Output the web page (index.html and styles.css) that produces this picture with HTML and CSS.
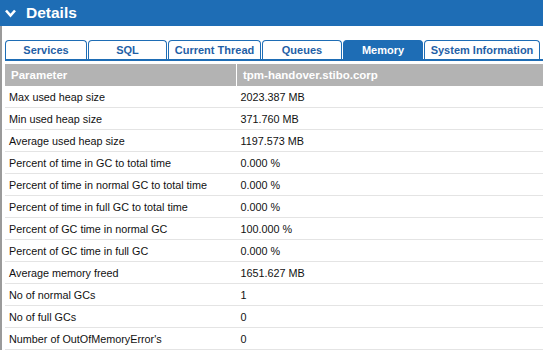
FILE: index.html
```html
<!DOCTYPE html>
<html lang="en">
<head>
    <meta charset="UTF-8">
    <title>Details</title>
    <link rel="stylesheet" href="styles.css">
</head>
<body>
    <div class="panel">
        <div class="panel-header">
            <svg class="chevron" width="11" height="9" viewBox="0 0 11 9"><path d="M1 1.5 L5.5 6.5 L10 1.5" fill="none" stroke="#fff" stroke-width="2.6"/></svg>
            <span>Details</span>
        </div>
        <div class="panel-body">
            <div class="tabs">
                <div class="tab t1">Services</div>
                <div class="tab t2">SQL</div>
                <div class="tab t3">Current Thread</div>
                <div class="tab t4">Queues</div>
                <div class="tab t5 active">Memory</div>
                <div class="tab t6">System Information</div>
            </div>
            <table class="grid">
                <thead>
                    <tr><th class="c1">Parameter</th><th>tpm-handover.stibo.corp</th></tr>
                </thead>
                <tbody>
                    <tr><td>Max used heap size</td><td>2023.387 MB</td></tr>
                    <tr><td>Min used heap size</td><td>371.760 MB</td></tr>
                    <tr><td>Average used heap size</td><td>1197.573 MB</td></tr>
                    <tr><td>Percent of time in GC to total time</td><td>0.000 %</td></tr>
                    <tr><td>Percent of time in normal GC to total time</td><td>0.000 %</td></tr>
                    <tr><td>Percent of time in full GC to total time</td><td>0.000 %</td></tr>
                    <tr><td>Percent of GC time in normal GC</td><td>100.000 %</td></tr>
                    <tr><td>Percent of GC time in full GC</td><td>0.000 %</td></tr>
                    <tr><td>Average memory freed</td><td>1651.627 MB</td></tr>
                    <tr><td>No of normal GCs</td><td>1</td></tr>
                    <tr><td>No of full GCs</td><td>0</td></tr>
                    <tr><td>Number of OutOfMemoryError's</td><td>0</td></tr>
                </tbody>
            </table>
        </div>
    </div>
</body>
</html>
```

FILE: styles.css
```css
body {
    margin: 0;
    font-family: "Liberation Sans", Arial, sans-serif;
    background: #fff;
    overflow: hidden;
}
.panel-header {
    background-color: #1e6db5;
    height: 26px;
    display: flex;
    align-items: center;
    color: #fff;
    font-weight: bold;
    font-size: 15.5px;
    padding-left: 5px;
    gap: 10px;
}
.chevron {
    margin-top: 1px;
}
.panel-body {
    border-left: 2px solid #9a9a9a;
    padding: 14px 0 0 3px;
    height: calc(100vh - 40px);
    overflow: hidden;
}
.tabs {
    display: flex;
    gap: 1px;
    height: 19px;
    border-bottom: 2px solid #1e6db5;
}
.tab {
    border: 1px solid #1e6db5;
    border-bottom: none;
    border-radius: 4px 4px 0 0;
    color: #1f5fa6;
    font-weight: bold;
    font-size: 11px;
    text-align: center;
    line-height: 18px;
    box-sizing: border-box;
    height: 19px;
}
.tab.active {
    background-color: #1e6db5;
    color: #fff;
}
.t1 { width: 82px; }
.t2 { width: 79px; }
.t3 { width: 93px; }
.t4 { width: 80px; }
.t5 { width: 80px; }
.t6 { width: 116px; }
.grid {
    border-collapse: collapse;
    margin-top: 3px;
    width: 538px;
    font-size: 10.8px;
}
.grid th {
    background-color: #b3b3b3;
    color: #fff;
    text-align: left;
    font-weight: bold;
    height: 22px;
    padding: 0 0 0 6px;
    font-size: 11.5px;
}
.grid th.c1 {
    width: 225px;
    border-right: 1px solid #fff;
}
.grid td {
    height: 21px;
    padding: 0 0 0 4px;
    border-bottom: 1px solid #e4e4e4;
    color: #111;
}
```
